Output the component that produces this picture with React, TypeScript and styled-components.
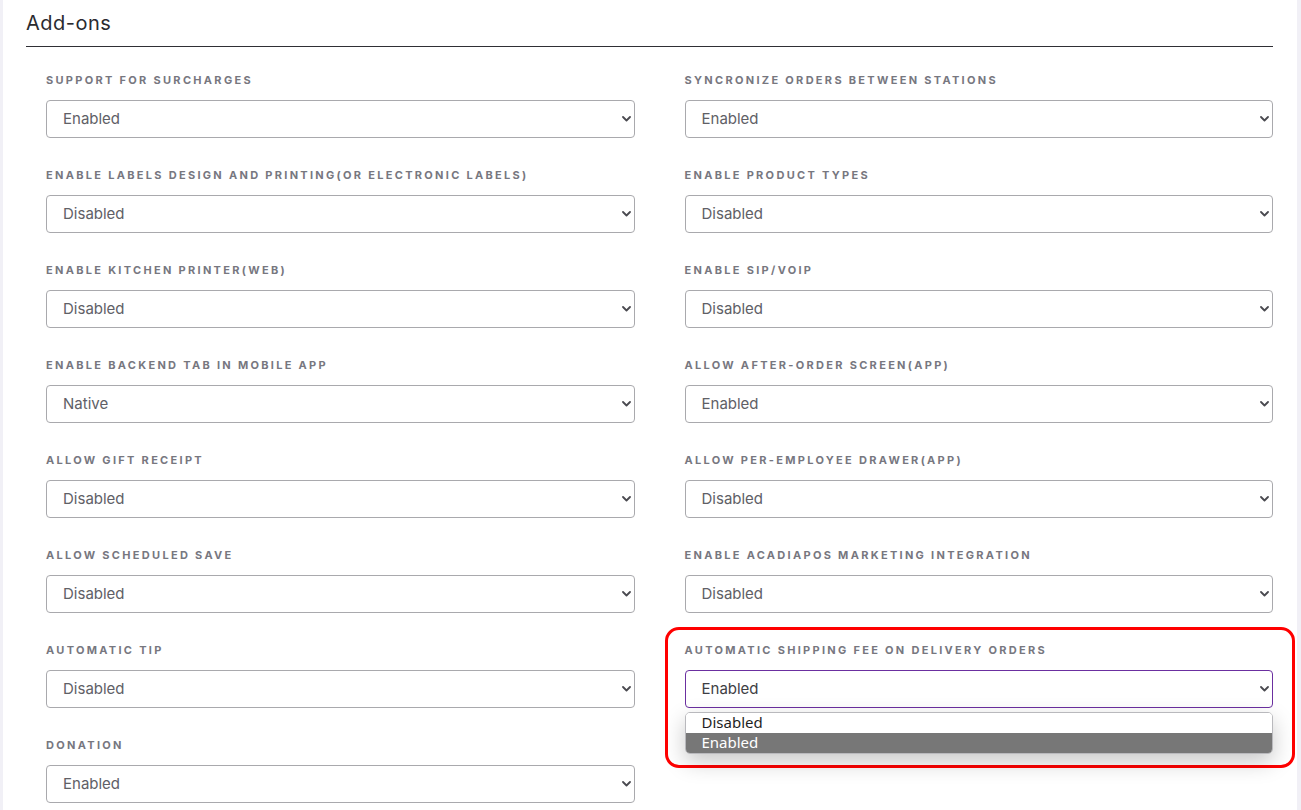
import styled, { createGlobalStyle } from "styled-components";

const GlobalStyle = createGlobalStyle`
  html, body {
    margin: 0;
    padding: 0;
    background: #f1f0f6;
    overflow: hidden;
  }
`;

const Card = styled.div({
    margin: "0 4px 0 3px",
    background: "#ffffff",
    minHeight: "810px",
    padding: "0 24px 0 23px",
    boxSizing: "border-box",
});

const Heading = styled.h2({
    margin: 0,
    padding: "9px 0 9px 0",
    fontFamily: "Inter, 'Open Sans', sans-serif",
    fontWeight: 400,
    fontSize: "20px",
    lineHeight: "28px",
    letterSpacing: "0.5px",
    color: "#2b2b30",
    borderBottom: "1px solid #2f2f35",
});

const Grid = styled.div({
    display: "grid",
    gridTemplateColumns: "1fr 1fr",
    columnGap: "50px",
    rowGap: "28px",
    padding: "24px 0 0 20px",
});

const Field = styled.div<{ $highlight?: boolean }>`
    position: relative;
    ${(p) =>
        p.$highlight &&
        `
    &::after {
        content: "";
        position: absolute;
        left: -20px;
        right: -22px;
        top: -14px;
        height: 141px;
        border: 3px solid #ff0000;
        border-radius: 14px;
        box-sizing: border-box;
        pointer-events: none;
    }
    `}
`;

const Label = styled.label({
    display: "block",
    fontFamily: "Inter, 'Open Sans', sans-serif",
    fontWeight: 700,
    fontSize: "11px",
    lineHeight: "18px",
    letterSpacing: "2.3px",
    textTransform: "uppercase",
    color: "#77777f",
    marginBottom: "11px",
});

const SelectWrap = styled.div({
    position: "relative",
});

const Select = styled.select<{ $active?: boolean }>`
    display: block;
    width: 100%;
    height: 38px;
    box-sizing: border-box;
    appearance: none;
    -webkit-appearance: none;
    background: #ffffff;
    border: 1px solid ${(p) => (p.$active ? "#6b2fa0" : "#a9a9ad")};
    border-radius: 4px;
    padding: 0 24px 2px 16px;
    font-family: Inter, "Open Sans", sans-serif;
    font-size: 15px;
    color: ${(p) => (p.$active ? "#3e3e44" : "#606066")};
    outline: none;
`;

const Chevron = styled.svg({
    position: "absolute",
    right: "4px",
    top: "16px",
    width: "9px",
    height: "6px",
    pointerEvents: "none",
});

const OptionList = styled.ul({
    position: "absolute",
    left: 0,
    right: 0,
    top: "42px",
    margin: 0,
    padding: 0,
    listStyle: "none",
    background: "#ffffff",
    border: "1px solid #b9b9bd",
    borderRadius: "5px",
    overflow: "hidden",
    boxShadow: "0 8px 22px rgba(0,0,0,0.22)",
    zIndex: 2,
});

const OptionItem = styled.li<{ $selected?: boolean }>`
    height: 20px;
    line-height: 19px;
    padding-left: 16px;
    font-family: "Noto Sans", "Open Sans", sans-serif;
    font-size: 15px;
    color: ${(p) => (p.$selected ? "#ffffff" : "#1f1f24")};
    background: ${(p) => (p.$selected ? "#777777" : "#ffffff")};
`;

interface FieldData {
    label: string;
    value: string;
    options?: string[];
}

const fields: FieldData[] = [
    { label: "Support for Surcharges", value: "Enabled" },
    { label: "Syncronize orders between stations", value: "Enabled" },
    { label: "Enable labels design and printing(or electronic labels)", value: "Disabled" },
    { label: "Enable product types", value: "Disabled" },
    { label: "Enable Kitchen Printer(Web)", value: "Disabled" },
    { label: "Enable SIP/VOIP", value: "Disabled" },
    { label: "Enable backend tab in mobile app", value: "Native", options: ["Disabled", "Native"] },
    { label: "Allow After-Order Screen(App)", value: "Enabled" },
    { label: "Allow Gift Receipt", value: "Disabled" },
    { label: "Allow Per-Employee Drawer(App)", value: "Disabled" },
    { label: "Allow Scheduled Save", value: "Disabled" },
    { label: "Enable AcadiaPOS Marketing Integration", value: "Disabled" },
    { label: "Automatic tip", value: "Disabled" },
    { label: "Automatic shipping fee on delivery orders", value: "Enabled" },
    { label: "Donation", value: "Enabled" },
];

const OPEN_INDEX = 13;

function ChevronIcon() {
    return (
        <Chevron viewBox="0 0 9 6">
            <path d="M1 1 L4.5 4.5 L8 1" fill="none" stroke="#4a4a50" strokeWidth="1.8" strokeLinecap="round" strokeLinejoin="round" />
        </Chevron>
    );
}

function SettingField({ data, open }: { data: FieldData; open: boolean }) {
    const options = data.options ?? ["Disabled", "Enabled"];
    return (
        <Field $highlight={open}>
            <Label>{data.label}</Label>
            <SelectWrap>
                <Select $active={open} defaultValue={data.value}>
                    {options.map((o) => (
                        <option key={o} value={o}>{o}</option>
                    ))}
                </Select>
                <ChevronIcon />
                {open && (
                    <OptionList>
                        {options.map((o) => (
                            <OptionItem key={o} $selected={o === data.value}>{o}</OptionItem>
                        ))}
                    </OptionList>
                )}
            </SelectWrap>
        </Field>
    );
}

export default function App() {
    return (
        <>
            <GlobalStyle />
            <Card>
                <Heading>Add-ons</Heading>
                <Grid>
                    {fields.map((f, i) => (
                        <SettingField key={f.label} data={f} open={i === OPEN_INDEX} />
                    ))}
                </Grid>
            </Card>
        </>
    );
}
